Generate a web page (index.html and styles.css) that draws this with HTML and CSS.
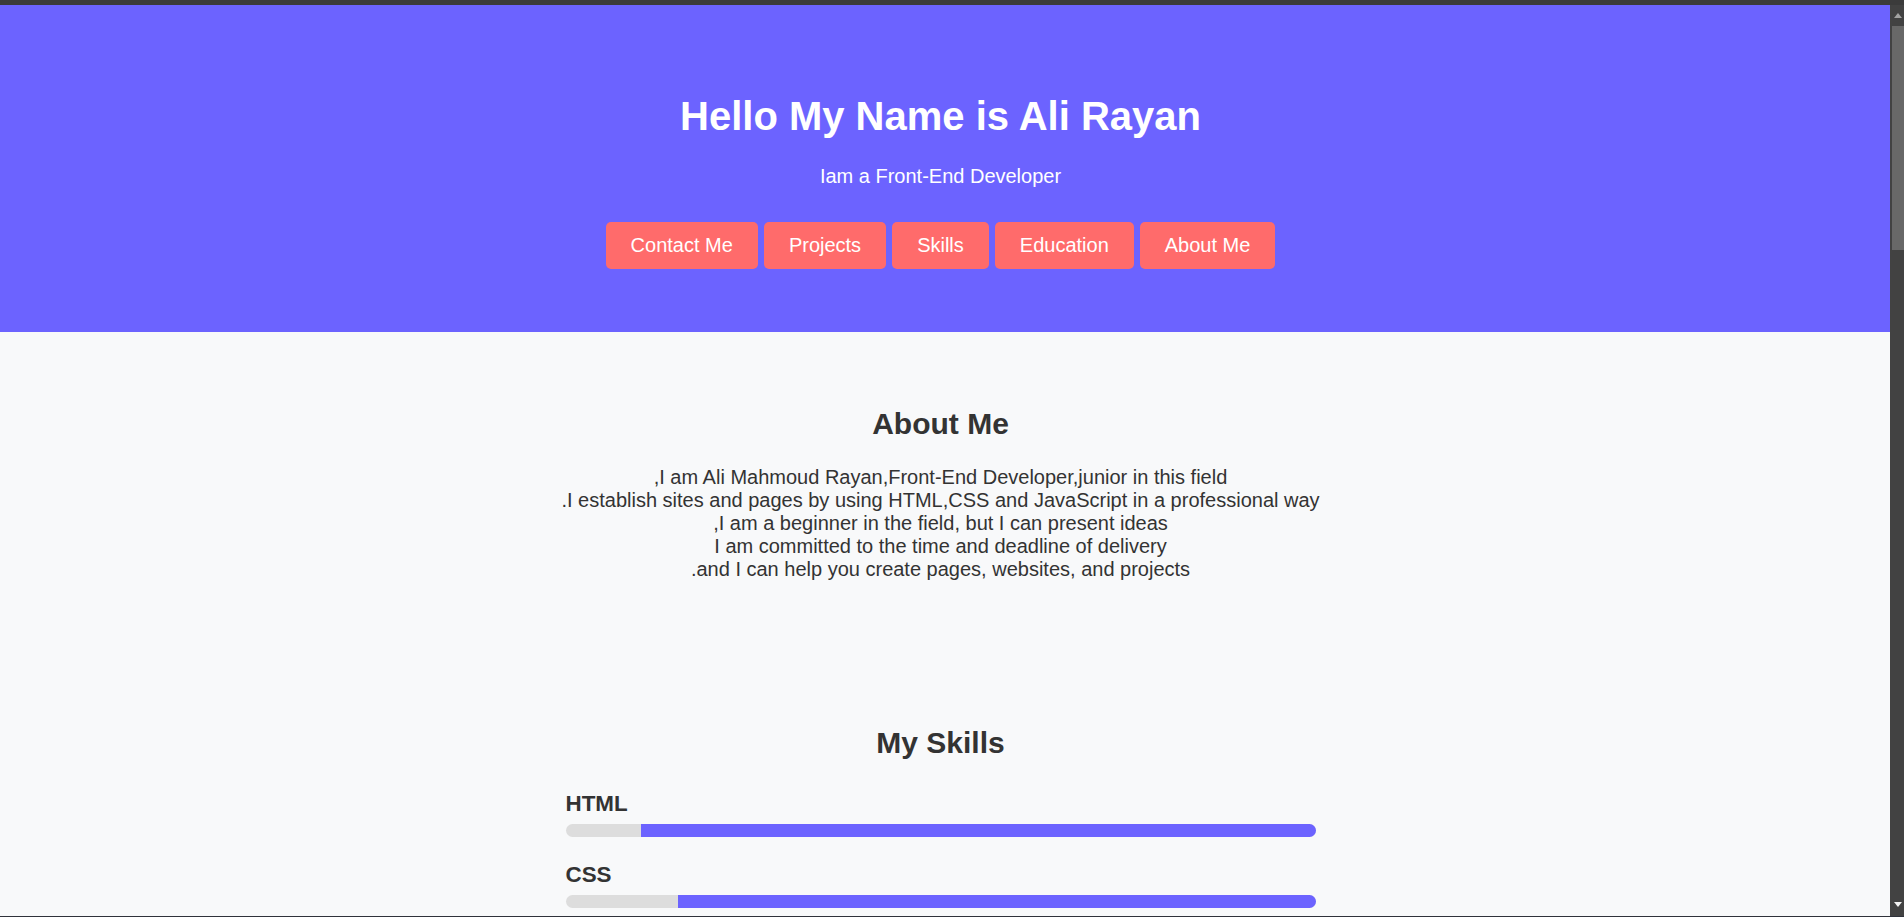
FILE: index.html
```html
<!DOCTYPE html>
<html lang="en">
<head>
<meta charset="utf-8">
<title>Ali Rayan</title>
<link rel="stylesheet" href="styles.css">
</head>
<body>
<div class="window">
  <div class="topbar"></div>
  <div class="frame">
    <div class="page">
      <header class="hero">
        <h1 class="hero-title">Hello My Name is Ali Rayan</h1>
        <p class="hero-sub">Iam a Front-End Developer</p>
        <nav class="hero-nav">
          <a class="btn">Contact Me</a>
          <a class="btn">Projects</a>
          <a class="btn">Skills</a>
          <a class="btn">Education</a>
          <a class="btn">About Me</a>
        </nav>
      </header>
      <section class="section about">
        <h2 class="section-title">About Me</h2>
        <div class="about-text">
          <div class="about-line" dir="rtl">I am Ali Mahmoud Rayan,Front-End Developer,junior in this field,</div>
          <div class="about-line" dir="rtl">I establish sites and pages by using HTML,CSS and JavaScript in a professional way.</div>
          <div class="about-line" dir="rtl">I am a beginner in the field, but I can present ideas,</div>
          <div class="about-line" dir="rtl">I am committed to the time and deadline of delivery</div>
          <div class="about-line" dir="rtl">and I can help you create pages, websites, and projects.</div>
        </div>
      </section>
      <section class="section skills">
        <h2 class="section-title">My Skills</h2>
        <div class="skill-list">
          <div class="skill">
            <h3 class="skill-name">HTML</h3>
            <div class="bar"><div class="fill" style="width:90%"></div></div>
          </div>
          <div class="skill">
            <h3 class="skill-name">CSS</h3>
            <div class="bar"><div class="fill" style="width:85%"></div></div>
          </div>
        </div>
      </section>
    </div>
    <div class="scrollbar">
      <div class="sb-btn sb-up"><span class="arrow-up"></span></div>
      <div class="sb-thumb"></div>
      <div class="sb-track"></div>
      <div class="sb-btn sb-down"><span class="arrow-down"></span></div>
    </div>
  </div>
  <div class="bottomline"></div>
</div>
</body>
</html>
```
FILE: styles.css
```css
html, body {
  margin: 0;
  padding: 0;
  height: 100%;
  overflow: hidden;
}

body {
  font-family: "Liberation Sans", Arial, sans-serif;
  color: #333;
  background: #f8f9fa;
}

.window {
  display: flex;
  flex-direction: column;
  height: 917px;
}

.topbar {
  height: 5px;
  background: #3b3b3b;
  flex: none;
}

.frame {
  flex: 1;
  display: flex;
  min-height: 0;
}

.page {
  flex: 1;
  min-width: 0;
  overflow: hidden;
  background: #f8f9fa;
}

.hero {
  background: #6c63ff;
  color: #fff;
  text-align: center;
  padding: 89px 9px 63px 0;
}

.hero-title {
  margin: 0;
  font-size: 40px;
  font-weight: bold;
}

.hero-sub {
  margin: 26px 0 0;
  font-size: 20px;
  line-height: 23px;
}

.hero-nav {
  margin-top: 34px;
  display: flex;
  justify-content: center;
  gap: 6px;
}

.btn {
  display: block;
  background: #ff6b6b;
  color: #fff;
  font-size: 20px;
  line-height: 23px;
  padding: 12px 25px;
  border-radius: 5px;
  text-decoration: none;
}

.section {
  padding: 50px 9px 50px 0;
  text-align: center;
}

.section-title {
  margin: 25px 0;
  font-size: 30px;
  font-weight: bold;
  color: #333;
}

.about-text {
  font-size: 20px;
  line-height: 23px;
  margin-bottom: 20px;
}

.about-line {
  text-align: center;
}

.skill-list {
  width: 750px;
  margin: 0 auto;
  padding-top: 6px;
  text-align: left;
}

.skill {
  margin-bottom: 25px;
}

.skill-name {
  margin: 0 0 7px;
  font-size: 22.4px;
  font-weight: bold;
  color: #333;
}

.bar {
  height: 13px;
  background: #ddd;
  border-radius: 7px;
  overflow: hidden;
  display: flex;
  justify-content: flex-end;
}

.fill {
  height: 100%;
  background: #6c63ff;
}

.scrollbar {
  width: 14px;
  flex: none;
  background: #424242;
  display: flex;
  flex-direction: column;
}

.sb-btn {
  height: 21px;
  flex: none;
  display: flex;
  justify-content: center;
  padding-left: 2px;
  box-sizing: border-box;
}

.sb-up {
  align-items: flex-start;
  padding-top: 8px;
}

.sb-down {
  align-items: flex-start;
  padding-top: 7px;
}

.arrow-up {
  width: 0;
  height: 0;
  border-left: 4px solid transparent;
  border-right: 4px solid transparent;
  border-bottom: 5px solid #a3a3a3;
}

.arrow-down {
  width: 0;
  height: 0;
  border-left: 4px solid transparent;
  border-right: 4px solid transparent;
  border-top: 5px solid #f2f2f2;
}

.sb-thumb {
  height: 224px;
  margin-left: 2px;
  background: #686868;
  flex: none;
}

.sb-track {
  flex: 1;
}

.bottomline {
  height: 1px;
  background: #2f323b;
  flex: none;
}
```
